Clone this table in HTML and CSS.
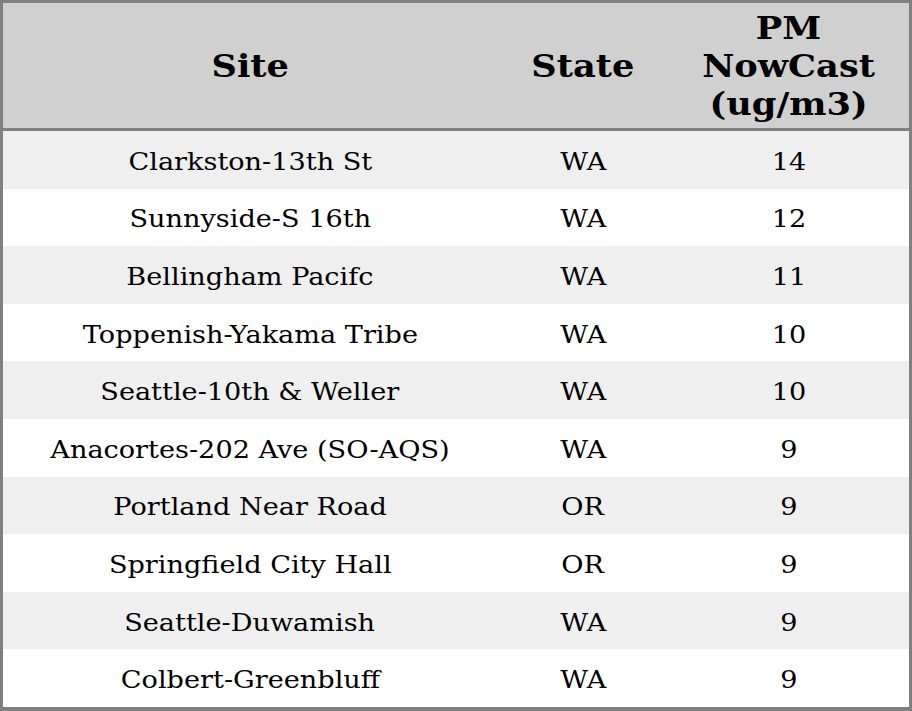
FILE: index.html
```html
<!DOCTYPE html>
<html>
<head>
<meta charset="utf-8">
<link rel="stylesheet" href="styles.css">
</head>
<body>
<table class="aq">
  <thead>
    <tr>
      <th class="c-site"><span class="wide">Site</span></th>
      <th class="c-state"><span class="wide">State</span></th>
      <th class="c-pm"><span class="wide">PM<br>NowCast<br>(ug/m3)</span></th>
    </tr>
  </thead>
  <tbody>
    <tr><td><span class="wide">Clarkston-13th St</span></td><td><span class="wide">WA</span></td><td><span class="wide">14</span></td></tr>
    <tr><td><span class="wide">Sunnyside-S 16th</span></td><td><span class="wide">WA</span></td><td><span class="wide">12</span></td></tr>
    <tr><td><span class="wide">Bellingham Pacifc</span></td><td><span class="wide">WA</span></td><td><span class="wide">11</span></td></tr>
    <tr><td><span class="wide">Toppenish-Yakama Tribe</span></td><td><span class="wide">WA</span></td><td><span class="wide">10</span></td></tr>
    <tr><td><span class="wide">Seattle-10th &amp; Weller</span></td><td><span class="wide">WA</span></td><td><span class="wide">10</span></td></tr>
    <tr><td><span class="wide">Anacortes-202 Ave (SO-AQS)</span></td><td><span class="wide">WA</span></td><td><span class="wide">9</span></td></tr>
    <tr><td><span class="wide">Portland Near Road</span></td><td><span class="wide">OR</span></td><td><span class="wide">9</span></td></tr>
    <tr><td><span class="wide">Springfield City Hall</span></td><td><span class="wide">OR</span></td><td><span class="wide">9</span></td></tr>
    <tr><td><span class="wide">Seattle-Duwamish</span></td><td><span class="wide">WA</span></td><td><span class="wide">9</span></td></tr>
    <tr><td><span class="wide">Colbert-Greenbluff</span></td><td><span class="wide">WA</span></td><td><span class="wide">9</span></td></tr>
  </tbody>
</table>
</body>
</html>
```
FILE: styles.css
```css
html, body {
  margin: 0;
  padding: 0;
  background: #ffffff;
}
.aq {
  width: 912px;
  border-collapse: separate;
  border-spacing: 0;
  border: 3px solid #808080;
  border-bottom-width: 4px;
  font-family: "DejaVu Serif", serif;
  color: #000;
  table-layout: fixed;
}
.wide {
  display: inline-block;
  transform-origin: center center;
}
.aq th {
  background: #d0d0d0;
  font-weight: bold;
  font-size: 32px;
  line-height: 38px;
  height: 125px;
  padding: 0;
  border-bottom: 3px solid #808080;
  text-align: center;
  vertical-align: middle;
}
.aq th .wide { transform: scaleX(1.1); }
.c-site { width: 494px; }
.c-state { width: 172px; }
.aq td {
  font-size: 25px;
  height: 57.6px;
  padding: 3px 0 0;
  box-sizing: border-box;
  text-align: center;
  vertical-align: middle;
}
.aq td .wide { transform: scaleX(1.085); }
.aq tbody tr:nth-child(odd) td { background: #efefef; }
.aq tbody tr:nth-child(even) td { background: #ffffff; }
```
